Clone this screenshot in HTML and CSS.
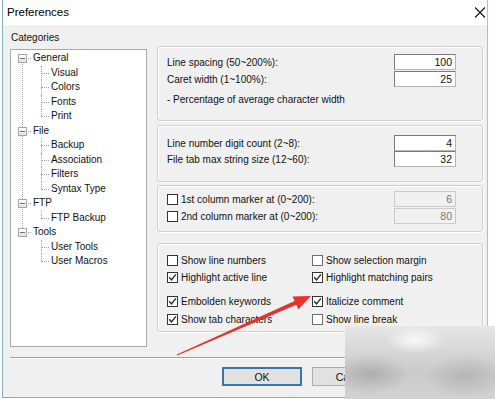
FILE: index.html
```html
<!DOCTYPE html>
<html>
<head>
<meta charset="utf-8">
<link rel="stylesheet" href="styles.css">
</head>
<body>
<div class="window">
  <div class="titlebar">
    <span class="title">Preferences</span>
    <svg class="close" width="12" height="11" viewBox="0 0 12 11"><path d="M1 0.5 L11 10.5 M11 0.5 L1 10.5" stroke="#111" stroke-width="1.1" fill="none"/></svg>
  </div>
  <div class="content">
    <div class="main">
      <div class="left">
        <div class="cat-label">Categories</div>
        <div class="tree">
          <ul class="roots">
            <li class="root">
              <div class="rrow"><span class="exp"></span>General</div>
              <ul class="kids"><li>Visual</li><li>Colors</li><li>Fonts</li><li>Print</li></ul>
            </li>
            <li class="root">
              <div class="rrow"><span class="exp"></span>File</div>
              <ul class="kids"><li>Backup</li><li>Association</li><li>Filters</li><li>Syntax Type</li></ul>
            </li>
            <li class="root">
              <div class="rrow"><span class="exp"></span>FTP</div>
              <ul class="kids"><li>FTP Backup</li></ul>
            </li>
            <li class="root">
              <div class="rrow"><span class="exp"></span>Tools</div>
              <ul class="kids"><li>User Tools</li><li>User Macros</li></ul>
            </li>
          </ul>
        </div>
      </div>
      <div class="right">
        <div class="group g1">
          <div class="frow"><span>Line spacing (50~200%):</span><span class="input">100</span></div>
          <div class="frow"><span>Caret width (1~100%):</span><span class="input">25</span></div>
          <div class="note">- Percentage of average character width</div>
        </div>
        <div class="group g2">
          <div class="frow"><span>Line number digit count (2~8):</span><span class="input">4</span></div>
          <div class="frow"><span>File tab max string size (12~60):</span><span class="input">32</span></div>
        </div>
        <div class="group g3">
          <div class="frow"><span class="chk"><span class="cb"></span>1st column marker at (0~200):</span><span class="input disabled">6</span></div>
          <div class="frow"><span class="chk"><span class="cb"></span>2nd column marker at (0~200):</span><span class="input disabled">80</span></div>
        </div>
        <div class="group g4">
          <div class="chk"><span class="cb"></span>Show line numbers</div>
          <div class="chk"><span class="cb light"></span>Show selection margin</div>
          <div class="chk"><span class="cb"><svg viewBox="0 0 9 9"><path d="M1.2 4.3 L3.5 6.9 L7.9 1.4" stroke="#222" stroke-width="1.3" fill="none"/></svg></span>Highlight active line</div>
          <div class="chk"><span class="cb"><svg viewBox="0 0 9 9"><path d="M1.2 4.3 L3.5 6.9 L7.9 1.4" stroke="#222" stroke-width="1.3" fill="none"/></svg></span>Highlight matching pairs</div>
          <div class="chk"><span class="cb"><svg viewBox="0 0 9 9"><path d="M1.2 4.3 L3.5 6.9 L7.9 1.4" stroke="#222" stroke-width="1.3" fill="none"/></svg></span>Embolden keywords</div>
          <div class="chk"><span class="cb"><svg viewBox="0 0 9 9"><path d="M1.2 4.3 L3.5 6.9 L7.9 1.4" stroke="#222" stroke-width="1.3" fill="none"/></svg></span>Italicize comment</div>
          <div class="chk"><span class="cb"><svg viewBox="0 0 9 9"><path d="M1.2 4.3 L3.5 6.9 L7.9 1.4" stroke="#222" stroke-width="1.3" fill="none"/></svg></span>Show tab characters</div>
          <div class="chk"><span class="cb light"></span>Show line break</div>
        </div>
      </div>
    </div>
    <div class="separator"></div>
    <div class="buttons">
      <button class="btn default">OK</button>
      <button class="btn">Cancel</button>
    </div>
  </div>
</div>
<svg class="arrow" width="495" height="399" viewBox="0 0 495 399">
  <polygon points="311,296 298.3,309.3 296.3,304.7 177.2,355.6 176.8,354.4 294.6,301.1 292.6,296.5" fill="#e5322b"/>
</svg>
<div class="blur"></div>
</body>
</html>
```
FILE: styles.css
```css
html, body {
  margin: 0;
  padding: 0;
}
body {
  width: 495px;
  height: 399px;
  overflow: hidden;
  background: #fbfdfe;
  font-family: "Liberation Sans", Arial, sans-serif;
  font-size: 10px;
  color: #111;
  position: relative;
}
.window {
  box-sizing: border-box;
  margin-left: 2px;
  width: 486px;
  height: 398px;
  border-left: 1px solid #7fb2c9;
  border-right: 1px solid #9cc4de;
  border-bottom: 1px solid #7fb2c9;
  display: flex;
  flex-direction: column;
}
.titlebar {
  height: 25px;
  flex: none;
  background: #fff;
  display: flex;
  align-items: center;
  justify-content: space-between;
  padding: 0 1px 2px 4px;
  box-sizing: border-box;
}
.title {
  font-size: 11.5px;
  color: #000;
}
.close {
  display: block;
  margin-top: 1px;
}
.content {
  flex: 1;
  background: #f0f0f0;
  padding: 6px 0 0 7px;
}
.main {
  display: flex;
  gap: 10px;
}
.left {
  width: 137px;
}
.cat-label {
  height: 14px;
  line-height: 14px;
  margin-bottom: 4px;
  padding-left: 1px;
}
.tree {
  box-sizing: border-box;
  height: 298px;
  border: 1px solid #a9a9a9;
  background: #fff;
  padding-top: 1px;
}
.tree ul {
  list-style: none;
  margin: 0;
  padding: 0;
}
.root {
  position: relative;
}
.root:not(:last-child)::before {
  content: "";
  position: absolute;
  left: 11px;
  top: 7px;
  height: 100%;
  border-left: 1px dotted #a0a0a0;
}
.rrow {
  position: relative;
  height: 14.5px;
  line-height: 14.5px;
  padding-left: 22px;
}
.rrow::after {
  content: "";
  position: absolute;
  left: 15px;
  top: 7px;
  width: 5px;
  border-top: 1px dotted #a0a0a0;
}
.exp {
  position: absolute;
  left: 7px;
  top: 3px;
  width: 9px;
  height: 9px;
  box-sizing: border-box;
  border: 1px solid #a6a6a6;
  background: linear-gradient(#fff, #e2e2e2);
  z-index: 1;
}
.exp::after {
  content: "";
  position: absolute;
  left: 1px;
  top: 3px;
  width: 5px;
  height: 1px;
  background: #707070;
}
.kids li {
  position: relative;
  height: 14.5px;
  line-height: 14.5px;
  padding-left: 40px;
}
.kids li::before {
  content: "";
  position: absolute;
  left: 30px;
  top: 7px;
  width: 8px;
  border-top: 1px dotted #a0a0a0;
}
.kids li::after {
  content: "";
  position: absolute;
  left: 30px;
  top: 0;
  height: 100%;
  border-left: 1px dotted #a0a0a0;
}
.kids li:last-child::after {
  height: 7px;
}
.right {
  width: 326px;
  margin-top: 15px;
}
.group {
  box-sizing: border-box;
  border: 1px solid #cfcfcf;
  border-radius: 3px;
  box-shadow: inset 1px 1px 0 #fff, 1px 1px 0 #fff;
  padding: 0 26px 0 9px;
}
.g1 {
  height: 75px;
  padding-top: 7px;
}
.g2 {
  margin-top: 4px;
  height: 57px;
  padding-top: 9px;
}
.g2 .frow {
  margin-bottom: 0;
}
.g3 {
  margin-top: 3px;
  height: 47px;
  padding-top: 5px;
}
.g4 {
  margin-top: 11px;
  height: 89px;
  padding-top: 8px;
  display: grid;
  grid-template-columns: 145px 1fr;
  grid-template-rows: 17px 17px 24px 18px;
  align-items: end;
}
.frow {
  display: flex;
  justify-content: space-between;
  align-items: center;
  height: 16px;
  margin-bottom: 1px;
}
.input {
  box-sizing: border-box;
  width: 62px;
  height: 16px;
  border: 1px solid #7a7a7a;
  border-right-color: #b5b5b5;
  border-bottom-color: #b5b5b5;
  background: #fff;
  text-align: right;
  padding-right: 3px;
  line-height: 14px;
  font-size: 10.5px;
}
.input.disabled {
  background: #f0f0f0;
  border-color: #cccccc;
  color: #7a7a7a;
}
.note {
  margin-top: 6px;
  line-height: 14px;
}
.chk {
  display: flex;
  align-items: center;
  white-space: nowrap;
  height: 17px;
}
.frow .chk {
  height: 16px;
}
.cb {
  box-sizing: border-box;
  width: 11px;
  height: 11px;
  border: 1px solid #333;
  background: #fff;
  margin-right: 3px;
  flex: none;
  display: flex;
  align-items: center;
  justify-content: center;
}
.cb.light {
  border-color: #6e6e6e;
}
.cb svg {
  width: 9px;
  height: 9px;
  display: block;
}
.separator {
  margin: 10px 2px 0 0;
  height: 1px;
  border-top: 1px solid #a0a0a0;
  background: #fff;
}
.buttons {
  display: flex;
  gap: 10px;
  margin-top: 8px;
  padding-left: 212px;
}
.btn {
  box-sizing: border-box;
  width: 80px;
  height: 19px;
  font-family: "Liberation Sans", Arial, sans-serif;
  font-size: 10.5px;
  color: #111;
  background: #e1e1e1;
  border: 1px solid #adadad;
  padding: 0;
  margin: 0;
}
.btn.default {
  border: 2px solid #3d74a3;
}
.arrow {
  position: absolute;
  left: 0;
  top: 0;
  pointer-events: none;
}
.blur {
  position: absolute;
  left: 345px;
  top: 326px;
  width: 150px;
  height: 73px;
  background:
    radial-gradient(ellipse 30px 14px at 70px 14px, rgba(255,255,255,0.8), rgba(255,255,255,0)),
    radial-gradient(ellipse 40px 20px at 25px 48px, rgba(150,150,150,0.55), rgba(150,150,150,0)),
    radial-gradient(ellipse 40px 22px at 120px 50px, rgba(160,160,160,0.5), rgba(160,160,160,0)),
    linear-gradient(180deg, #e6e6e6 0%, #d6d6d6 35%, #cbcbcb 65%, #d2d2d2 100%);
}
```
